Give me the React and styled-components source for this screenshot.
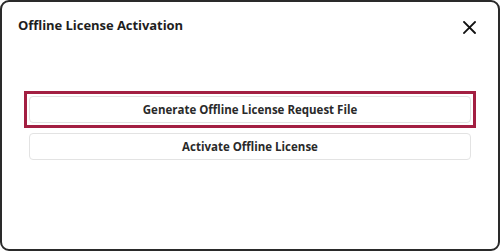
import React from "react";
import styled, { createGlobalStyle } from "styled-components";

const GlobalStyle = createGlobalStyle`
  html, body {
    margin: 0;
    padding: 0;
    background: #ffffff;
  }
  body {
    font-family: "Open Sans", "Liberation Sans", sans-serif;
  }
`;

function CloseIcon() {
  return (
    <svg width="13" height="13" viewBox="0 0 13 13" aria-hidden="true">
      <path
        d="M1 1 L12 12 M12 1 L1 12"
        stroke="#111"
        strokeWidth="1.8"
        strokeLinecap="square"
      />
    </svg>
  );
}

function App() {
  const [focused, setFocused] = React.useState("request");

  return (
    <>
      <GlobalStyle />
      <Dialog>
        <Header>
          <Title>Offline License Activation</Title>
          <CloseButton type="button" aria-label="Close">
            <CloseIcon />
          </CloseButton>
        </Header>
        <Body>
          <ActionButton
            type="button"
            $focused={focused === "request"}
            onClick={() => setFocused("request")}
          >
            Generate Offline License Request File
          </ActionButton>
          <ActionButton
            type="button"
            $focused={focused === "activate"}
            onClick={() => setFocused("activate")}
          >
            Activate Offline License
          </ActionButton>
        </Body>
      </Dialog>
    </>
  );
}

const Dialog = styled.div`
  box-sizing: border-box;
  width: 500px;
  height: 251px;
  background: #fff;
  border: 2px solid #2a2a2a;
  border-radius: 9px;
  display: flex;
  flex-direction: column;
`;

const Header = styled.div`
  display: flex;
  justify-content: space-between;
  align-items: center;
  padding: 12px 22px 0 16px;
  height: 22px;
`;

const Title = styled.h1`
  margin: 0;
  font-size: 13px;
  font-weight: 700;
  color: #1e1e1e;
  letter-spacing: -0.05px;
`;

const CloseButton = styled.button`
  display: flex;
  padding: 0;
  border: none;
  background: none;
  cursor: pointer;
  margin-top: 4px;
`;

const Body = styled.div`
  display: flex;
  flex-direction: column;
  gap: 10px;
  padding: 60px 27px 0 27px;
`;

const ActionButton = styled.button`
  position: relative;
  box-sizing: border-box;
  width: 442px;
  height: 27px;
  background: #fff;
  border: 1px solid #e3e3e3;
  border-radius: 4px;
  font-family: "Open Sans", "Liberation Sans", sans-serif;
  font-size: 11.5px;
  font-weight: 700;
  color: #2a2a2a;
  cursor: pointer;
  outline: none;

  &::after {
    content: "";
    display: ${({ $focused }) => ($focused ? "block" : "none")};
    position: absolute;
    inset: -6px;
    border: 3px solid #a31f42;
    pointer-events: none;
  }
`;

export default App;
